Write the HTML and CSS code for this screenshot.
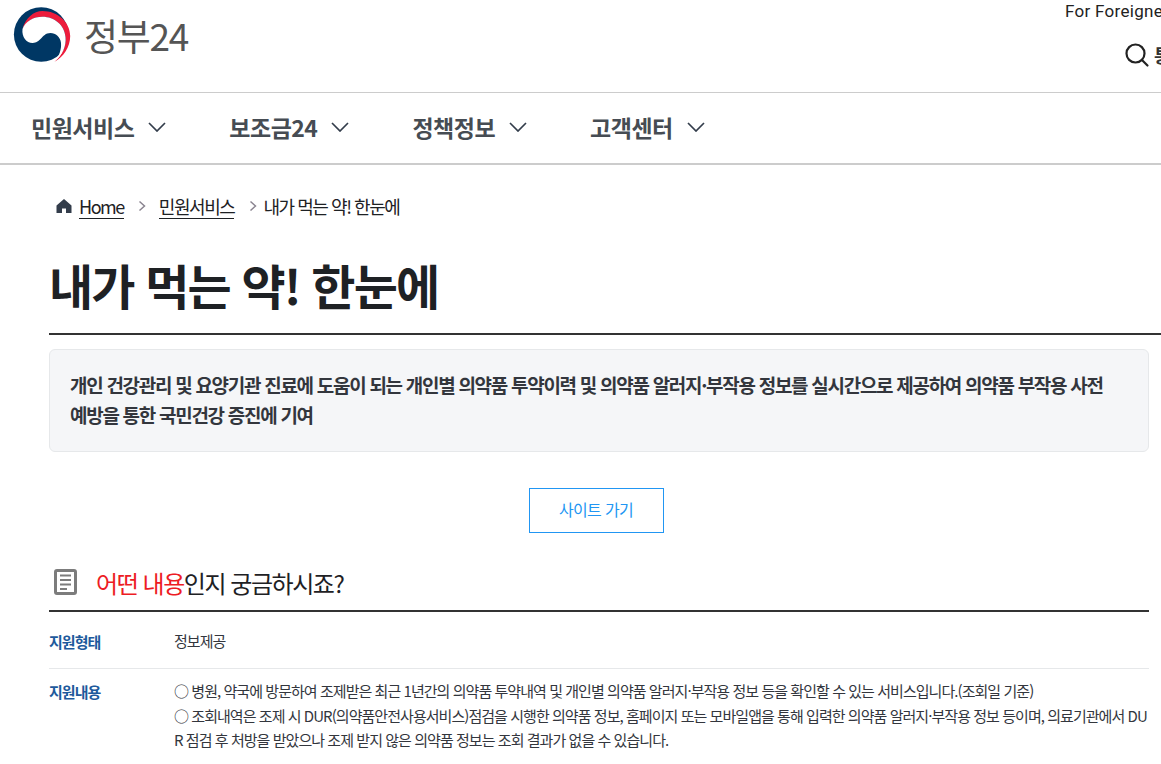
FILE: index.html
```html
<!DOCTYPE html>
<html lang="ko">
<head>
<meta charset="utf-8">
<title>내가 먹는 약! 한눈에</title>
<link rel="stylesheet" href="styles.css">
</head>
<body>
<div class="page">
<header class="top">
  <a class="logo">
    <svg class="emblem" width="58" height="56" viewBox="0 0 58 56">
      <circle cx="28.200" cy="27.500" r="27.300" fill="#003764"/>
      <path d="M9.500 22C12.500 11 20.500 4 29.500 4C44.500 4 57.200 15 57.200 29C57.200 40 50.500 50 41.500 54.700C49.500 48 53.500 39 52.500 30C51.500 18 41.500 9.700 29.500 9.700C20.500 9.700 13.500 14 9.500 22Z" fill="#ed1c3c"/>
      <path d="M9.500 22C12.500 14 20.500 9.700 29.500 9.700C41.500 9.700 51.500 18 52.500 30C53.500 39 49.500 48 41.500 54.700C46.500 49 48.500 42 48 36C47.500 30 42.500 26 37.500 26C32.500 26 30.500 29 27.500 32C24.500 35 21.500 36 19.500 36C13.500 36 8.500 30 9.500 22Z" fill="#fff"/>
    </svg>
    <span class="logo-text">정부24</span>
  </a>
  <div class="top-right">
    <div class="foreign">For Foreigners</div>
    <div class="search">
      <svg width="26" height="26" viewBox="0 0 26 26" fill="none" stroke="#222" stroke-width="2.200" stroke-linecap="round"><circle cx="11.500" cy="11.500" r="9"/><path d="M18 18l5.500 5.500"/></svg>
      <span class="search-label">통합검색</span>
    </div>
  </div>
</header>
<nav class="gnb">
  <a class="gnb-item gnb-a">민원서비스<svg class="chev" width="18" height="10" viewBox="0 0 18 10" fill="none" stroke="#333d4b" stroke-width="1.700"><path d="M1 1l8 8 8-8"/></svg></a>
  <a class="gnb-item gnb-b">보조금24<svg class="chev" width="18" height="10" viewBox="0 0 18 10" fill="none" stroke="#333d4b" stroke-width="1.700"><path d="M1 1l8 8 8-8"/></svg></a>
  <a class="gnb-item gnb-c">정책정보<svg class="chev" width="18" height="10" viewBox="0 0 18 10" fill="none" stroke="#333d4b" stroke-width="1.700"><path d="M1 1l8 8 8-8"/></svg></a>
  <a class="gnb-item">고객센터<svg class="chev" width="18" height="10" viewBox="0 0 18 10" fill="none" stroke="#333d4b" stroke-width="1.700"><path d="M1 1l8 8 8-8"/></svg></a>
</nav>
<main class="content">
  <div class="crumbs">
    <svg class="home" width="16" height="16" viewBox="0 0 16 16"><path d="M8 1L0.500 7.500V15H6V10.500H10V15H15.500V7.500Z" fill="#333d4b"/></svg>
    <a class="crumb-link">Home</a>
    <svg class="sep" width="8" height="12" viewBox="0 0 8 12" fill="none" stroke="#8a8490" stroke-width="1.500"><path d="M1.500 1.500L6.500 6l-5 4.500"/></svg>
    <a class="crumb-link">민원서비스</a>
    <svg class="sep sep-last" width="8" height="12" viewBox="0 0 8 12" fill="none" stroke="#8a8490" stroke-width="1.500"><path d="M1.500 1.500L6.500 6l-5 4.500"/></svg>
    <span class="crumb-now">내가 먹는 약! 한눈에</span>
  </div>
  <h1 class="title">내가 먹는 약! 한눈에</h1>
  <div class="summary">개인 건강관리 및 요양기관 진료에 도움이 되는 개인별 의약품 투약이력 및 의약품 알러지·부작용 정보를 실시간으로 제공하여 의약품 부작용 사전 예방을 통한 국민건강 증진에 기여</div>
  <div class="actions"><a class="site-btn">사이트 가기</a></div>
  <h2 class="section-title">
    <svg class="doc" width="23" height="26" viewBox="0 0 23 26" fill="none" stroke="#7c7c7c"><rect x="1.500" y="1.500" width="20" height="23" rx="1.500" stroke-width="3"/><path d="M6 6.500h11M6 11h11M6 15.500h11M6 20h7" stroke-width="2"/></svg>
    <span><em class="accent">어떤 내용</em>인지 궁금하시죠?</span>
  </h2>
  <dl class="info">
    <div class="info-row">
      <dt class="info-key">지원형태</dt>
      <dd class="info-val">정보제공</dd>
    </div>
    <div class="info-row info-row-wide">
      <dt class="info-key">지원내용</dt>
      <dd class="info-val">○ 병원, 약국에 방문하여 조제받은 최근 1년간의 의약품 투약내역 및 개인별 의약품 알러지·부작용 정보 등을 확인할 수 있는 서비스입니다.(조회일 기준)<br>○ 조회내역은 조제 시 DUR(의약품안전사용서비스)점검을 시행한 의약품 정보, 홈페이지 또는 모바일앱을 통해 입력한 의약품 알러지·부작용 정보 등이며, 의료기관에서 DUR 점검 후 처방을 받았으나 조제 받지 않은 의약품 정보는 조회 결과가 없을 수 있습니다.</dd>
    </div>
  </dl>
</main>
</div>
</body>
</html>
```
FILE: styles.css
```css
* { box-sizing: border-box; }
html, body { margin: 0; padding: 0; height: 764px; overflow: hidden; background: #fff; }
body { font-family: "Noto Sans CJK KR", "Noto Sans", sans-serif; color: #1e2124; }
.page { width: 1161px; }

.top { display: flex; justify-content: space-between; width: 1401px; height: 93px; border-bottom: 1px solid #ccc; }
.logo { display: flex; align-items: flex-start; padding: 7px 0 0 13px; }
.emblem { display: block; }
.logo-text { margin: 3px 0 0 13px; font-size: 37px; line-height: 50px; color: #555; letter-spacing: -1.300px; }
.top-right { width: 336px; }
.foreign { font-family: "Roboto", sans-serif; font-size: 17px; line-height: 22px; color: #222; white-space: nowrap; letter-spacing: 0.300px; }
.search { display: flex; align-items: center; gap: 4px; margin: 20px 0 0 59px; height: 26px; }
.search-label { font-size: 18px; font-weight: 700; color: #333; white-space: nowrap; }

.gnb { display: flex; align-items: center; height: 72px; padding: 0 0 3px 31px; border-bottom: 2px solid #ccc; }
.gnb-item { display: flex; align-items: center; font-size: 23px; font-weight: 700; color: #464c53; letter-spacing: -0.500px; line-height: 30px; white-space: nowrap; }
.gnb-a { margin-right: 63px; }
.gnb-b { margin-right: 63px; }
.gnb-c { margin-right: 63px; }
.chev { margin-left: 14px; }

.content { padding: 0 12px 0 49px; }
.crumbs { display: flex; align-items: center; height: 30px; margin: 26px 0 0 7px; font-size: 18px; letter-spacing: -1.450px; color: #1e2124; }
.home { margin-right: 7px; }
.crumb-link { border-bottom: 1px solid #1e2124; line-height: 24px; }
.sep { margin: 0 13px 0 14px; }
.sep-last { margin: 0 6px 0 15px; }
.crumb-now { line-height: 24px; }

.title { width: 1200px; height: 85px; margin: 29px 0 0; font-size: 48px; line-height: 68px; font-weight: 700; color: #1e2124; letter-spacing: -1.850px; border-bottom: 2px solid #333; }

.summary { height: 103px; margin-top: 14px; padding: 20px; background: #f5f6f8; border: 1px solid #e6e8ea; border-radius: 6px; font-size: 19px; line-height: 30px; font-weight: 700; color: #33363d; letter-spacing: -1.290px; word-break: keep-all; }

.actions { display: flex; justify-content: center; margin-top: 36px; padding-right: 6px; }
.site-btn { display: flex; align-items: center; justify-content: center; width: 135px; height: 45px; padding-bottom: 3px; border: 1px solid #2196f3; color: #2196f3; font-size: 16px; letter-spacing: -0.700px; }

.section-title { display: flex; align-items: center; height: 79px; margin: 0; padding: 21px 0 0 5px; font-size: 24px; font-weight: 400; color: #1e2124; letter-spacing: -1.450px; border-bottom: 2px solid #333; }
.doc { margin-right: 19px; }
.accent { font-style: normal; color: #ed1c24; }

.info { margin: 0; font-size: 15px; letter-spacing: -0.950px; }
.info-row { display: flex; height: 57px; align-items: center; border-bottom: 1px solid #e6e8ea; padding-top: 3px; }
.info-row-wide { height: auto; align-items: flex-start; padding-top: 10px; border-bottom: 0; }
.info-key { width: 125px; flex: none; font-weight: 700; color: #1d5a9c; line-height: 26px; }
.info-val { margin: 0; color: #33363d; line-height: 24.500px; word-break: break-all; }
```
